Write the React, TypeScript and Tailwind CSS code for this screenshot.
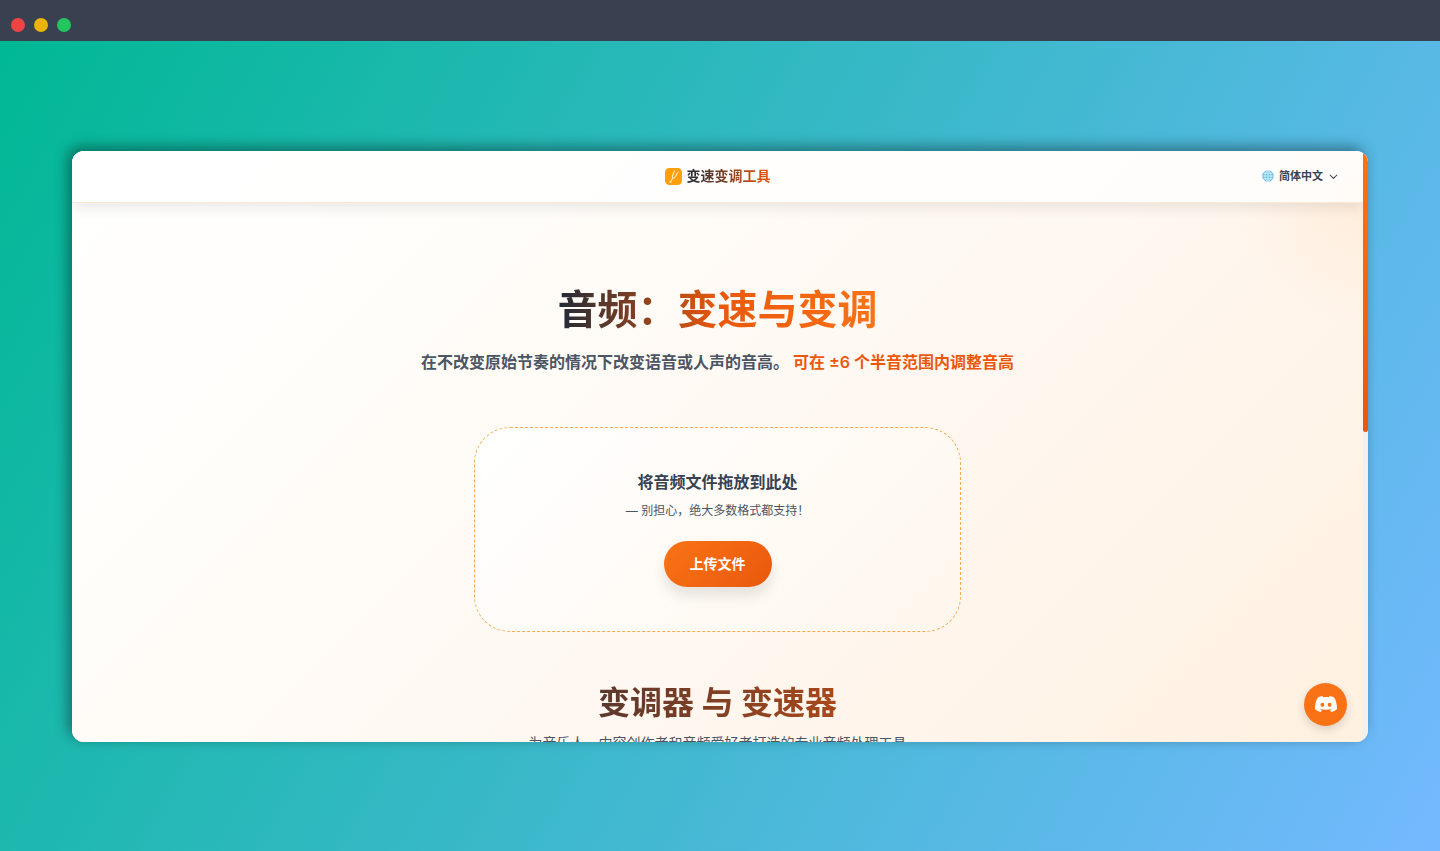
function TuningForkLogo() {
  return (
    <svg viewBox="0 0 34 34" className="size-[17px]" aria-hidden="true">
      <rect width="34" height="34" rx="9" fill="#ff9f0a" />
      <g fill="none" stroke="#ffe9c4" strokeWidth="2.2" strokeLinecap="round">
        <path d="M19 6 L15 15 Q13.500 19 16 20 Q18.500 20.500 20.500 17.500 L26 8" />
        <path d="M15.500 20 L11 28" />
      </g>
      <circle cx="11" cy="28" r="2" fill="#ffe9c4" />
    </svg>
  );
}

function GlobeIcon() {
  return (
    <svg viewBox="0 0 24 24" className="size-3" aria-hidden="true">
      <circle cx="12" cy="12" r="11.500" fill="#5dbbe0" />
      <g fill="none" stroke="#e0f4fb" strokeWidth="1.800">
        <path d="M12 1v22M1 12h22M3 6.500h18M3 17.500h18" />
        <ellipse cx="12" cy="12" rx="6" ry="11" />
      </g>
    </svg>
  );
}

function DiscordIcon() {
  return (
    <svg viewBox="0 0 22 16" className="h-4 w-[22px]" fill="currentColor" aria-hidden="true">
      <path
        fillRule="evenodd"
        d="M7.400 0C5.700 0.300 4.200 0.800 2.900 1.500C1 4.500 0 8 0 12.900C1.500 14.500 3.500 15.500 5.800 15.900L7 14C6.200 13.700 5.500 13.400 4.900 13L5.400 12.700C9 14.200 13 14.200 16.600 12.700L17.100 13C16.500 13.400 15.800 13.700 15 14L16.200 15.900C18.500 15.500 20.500 14.500 22 12.900C22 8 21 4.500 19.100 1.500C17.800 0.800 16.300 0.300 14.600 0L13.900 1.300C12 1 10 1 8.100 1.300ZM7.400 6.700A1.950 2.100 0 1 0 7.400 10.900A1.950 2.100 0 1 0 7.400 6.700ZM14.600 6.700A1.950 2.100 0 1 0 14.600 10.900A1.950 2.100 0 1 0 14.600 6.700Z"
      />
    </svg>
  );
}

function TitleBar() {
  return (
    <div className="flex h-[41px] shrink-0 items-end gap-[9px] bg-[#394150] px-[11px] pb-[9px]">
      <span className="size-3.5 rounded-full bg-[#ef4444]" />
      <span className="size-3.5 rounded-full bg-[#eab308]" />
      <span className="size-3.5 rounded-full bg-[#22c55e]" />
    </div>
  );
}

function Header() {
  return (
    <header className="relative grid h-[52px] shrink-0 grid-cols-[1fr_auto_1fr] items-center border-b border-[#fbe9d5] bg-white/80 px-[25px] shadow-[0_6px_12px_rgba(0,0,0,0.08)]">
      <span />
      <a href="#" className="flex items-center gap-[5px]">
        <TuningForkLogo />
        <span className="bg-[linear-gradient(90deg,#1f2937,#ea580c)] bg-clip-text text-[14px] leading-5 font-bold text-transparent">
          变速变调工具
        </span>
      </a>
      <button type="button" className="flex items-center gap-[5px] justify-self-end text-[11px] leading-4 font-semibold text-[#374151]">
        <GlobeIcon />
        简体中文
        <svg viewBox="0 0 12 12" className="ml-px size-[9px]" fill="none" stroke="currentColor" strokeWidth="1.400" strokeLinecap="round" strokeLinejoin="round" aria-hidden="true">
          <path d="M1.500 4 L6 8.500 L10.500 4" />
        </svg>
      </button>
    </header>
  );
}

function UploadArea() {
  return (
    <section className="mt-[53px] flex w-[487px] max-w-full flex-col items-center rounded-[36px] border border-dashed border-[#fba94f] bg-[linear-gradient(135deg,rgba(255,255,255,0.9),rgba(255,247,237,0.6))] pt-[42px] pb-[44px]">
      <h2 className="text-[16px] leading-6 font-bold text-[#374151]">将音频文件拖放到此处</h2>
      <p className="mt-[7px] text-[12px] leading-5 text-[#4b5563]">— 别担心，绝大多数格式都支持！</p>
      <button
        type="button"
        className="mt-5 h-[46px] rounded-full bg-[linear-gradient(135deg,#f97316,#ea580c)] px-[26px] text-[14px] leading-5 font-bold text-white shadow-[0_9px_14px_rgba(0,0,0,0.1)]"
      >
        上传文件
      </button>
    </section>
  );
}

export default function App() {
  return (
    <div
      lang="zh-CN"
      className="flex min-h-screen flex-col bg-[#394150] font-['Inter','Noto_Sans_CJK_SC',sans-serif]"
    >
      <TitleBar />
      <div className="flex grow flex-col justify-center bg-[linear-gradient(120deg,#00b894,#74b9ff)] px-[5%]">
        <div className="relative flex h-[591px] overflow-hidden rounded-xl bg-[#fff7ed] shadow-[-4px_-4px_14px_rgba(0,0,0,0.4)]">
          <div className="flex min-w-0 grow flex-col overflow-hidden bg-[radial-gradient(circle_at_100%_8%,rgba(255,232,208,0.6),transparent_9%),linear-gradient(135deg,#ffffff_0%,#fffdf9_28%,#fff8f3_52%,#fff1e1_100%)]">
            <Header />
            <main className="flex shrink-0 flex-col items-center pt-[81px] text-center">
              <h1 className="bg-[linear-gradient(90deg,#1f2937,#ea580c_50%,#f97316)] bg-clip-text text-[40px] leading-[52px] font-bold text-transparent">
                音频：变速与变调
              </h1>
              <p className="mt-[14px] text-[16px] leading-6 font-semibold text-[#4b5563]">
                在不改变原始节奏的情况下改变语音或人声的音高。{" "}
                <span className="text-[#ea580c]">可在 ±6 个半音范围内调整音高</span>
              </p>
              <UploadArea />
              <h2 className="mt-[49px] bg-[linear-gradient(90deg,#5a382d,#a8481b)] bg-clip-text text-[32px] leading-[44px] font-bold text-transparent">
                变调器 与 变速器
              </h2>
              <p className="mt-2 text-[14px] leading-5 text-[#4b5563]">
                为音乐人、内容创作者和音频爱好者打造的专业音频处理工具
              </p>
            </main>
          </div>
          <div className="w-[5px] shrink-0 bg-[#f1f1f1]">
            <div className="h-[281px] rounded-[3px] bg-linear-to-b from-[#f97316] to-[#ea580c]" />
          </div>
          <a
            href="#"
            aria-label="Discord"
            className="absolute right-[21px] bottom-4 flex size-[43px] items-center justify-center rounded-full bg-[#f97316] text-white shadow-[0_4px_10px_rgba(0,0,0,0.14)]"
          >
            <DiscordIcon />
          </a>
        </div>
      </div>
    </div>
  );
}
